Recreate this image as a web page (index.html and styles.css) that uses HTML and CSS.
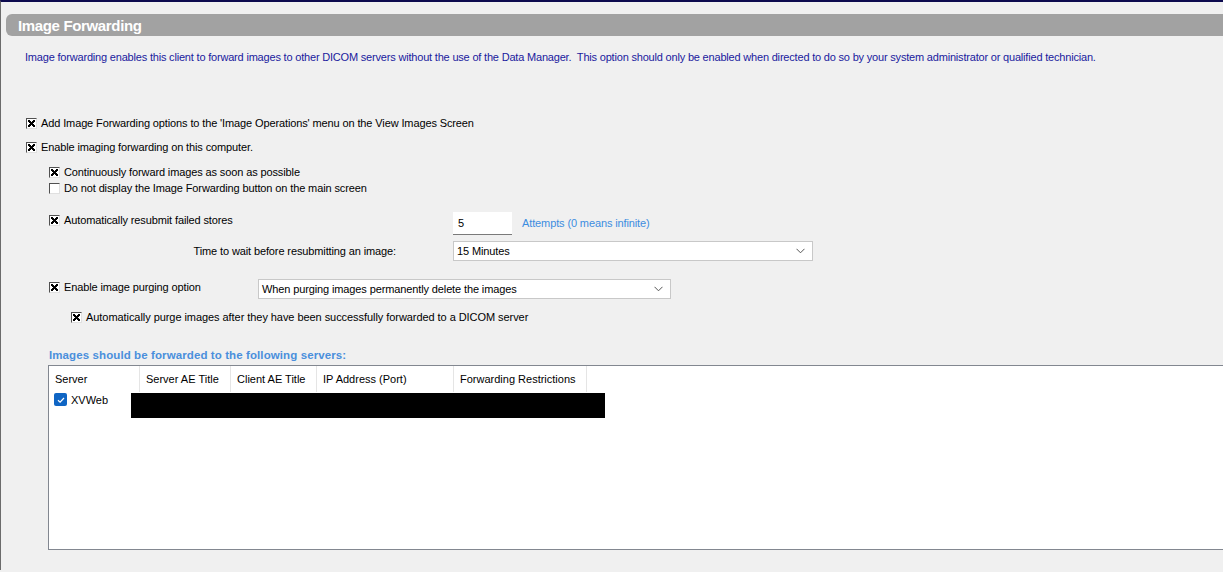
FILE: index.html
```html
<!DOCTYPE html>
<html>
<head>
<meta charset="utf-8">
<link rel="stylesheet" href="styles.css">
</head>
<body>
<div class="page">
  <div class="title-bar">Image Forwarding</div>
  <p class="desc">Image forwarding enables this client to forward images to other DICOM servers without the use of the Data Manager.&nbsp; This option should only be enabled when directed to do so by your system administrator or qualified technician.</p>

  <div class="opt opt-l1 r1"><span class="cb on"></span><span>Add Image Forwarding options to the 'Image Operations' menu on the View Images Screen</span></div>
  <div class="opt opt-l1 r2"><span class="cb on"></span><span>Enable imaging forwarding on this computer.</span></div>

  <div class="opt opt-l2 r3"><span class="cb on"></span><span>Continuously forward images as soon as possible</span></div>
  <div class="opt opt-l2 r4"><span class="cb"></span><span>Do not display the Image Forwarding button on the main screen</span></div>

  <div class="grid-row r5">
    <div class="opt opt-top"><span class="cb on"></span><span>Automatically resubmit failed stores</span></div>
    <div class="inline">
      <div class="textbox">5</div>
      <span class="hint">Attempts (0 means infinite)</span>
    </div>
  </div>

  <div class="grid-row r6">
    <div class="right-label">Time to wait before resubmitting an image:</div>
    <div class="select sel-wait"><span>15 Minutes</span><svg class="chev" width="9" height="6" viewBox="0 0 9 6"><path d="M0.5 0.8 L4.5 4.8 L8.5 0.8" fill="none" stroke="#555" stroke-width="1"/></svg></div>
  </div>

  <div class="purge-row r7">
    <div class="opt purge-label"><span class="cb on"></span><span>Enable image purging option</span></div>
    <div class="select sel-purge"><span>When purging images permanently delete the images</span><svg class="chev" width="9" height="6" viewBox="0 0 9 6"><path d="M0.5 0.8 L4.5 4.8 L8.5 0.8" fill="none" stroke="#555" stroke-width="1"/></svg></div>
  </div>

  <div class="opt opt-l3 r8"><span class="cb on"></span><span>Automatically purge images after they have been successfully forwarded to a DICOM server</span></div>

  <div class="servers-label">Images should be forwarded to the following servers:</div>

  <div class="listbox">
    <div class="lv-head">
      <div class="col c1">Server</div>
      <div class="col c2">Server AE Title</div>
      <div class="col c3">Client AE Title</div>
      <div class="col c4">IP Address (Port)</div>
      <div class="col c5">Forwarding Restrictions</div>
    </div>
    <div class="lv-row">
      <span class="mcb"><svg width="12" height="12" viewBox="0 0 12 12"><path d="M3 6.2 L5.1 8.2 L9 4" fill="none" stroke="#fff" stroke-width="1.2"/></svg></span>
      <span class="srv">XVWeb</span>
      <span class="redact"></span>
    </div>
  </div>
</div>
</body>
</html>
```
FILE: styles.css
```css
html, body {
  margin: 0;
  padding: 0;
}
body {
  background: #f0f0f0;
  width: 1223px;
  height: 572px;
  overflow: hidden;
  font-family: Tahoma, "Liberation Sans", "DejaVu Sans", sans-serif;
  font-size: 11px;
  letter-spacing: -0.12px;
  color: #000;
}
.page {
  border-top: 2px solid #0c0a4e;
  border-left: 1px solid #6b6b6b;
  height: 570px;
  box-sizing: border-box;
  position: relative;
}
.title-bar {
  margin: 12px 0 0 5px;
  height: 22px;
  box-sizing: border-box;
  padding-top: 2px;
  line-height: 20px;
  background: #a2a2a2;
  border-radius: 6px 0 0 6px;
  color: #fff;
  font-weight: bold;
  font-size: 15px;
  letter-spacing: -0.35px;
  padding-left: 12px;
  font-family: "Liberation Sans", Arial, sans-serif;
}
.desc {
  margin: 13px 0 0 24px;
  height: 16px;
  line-height: 16px;
  color: #1a1a9e;
  white-space: nowrap;
  letter-spacing: -0.19px;
}
.opt {
  display: flex;
  align-items: center;
  height: 16px;
  line-height: 16px;
  white-space: nowrap;
}
.opt .cb {
  margin-right: 4px;
}
.opt-l1 { padding-left: 25px; }
.opt-l2 { padding-left: 48px; }
.opt-l3 { padding-left: 70px; }
.r1 { margin-top: 50px; }
.r2 { margin-top: 8px; }
.r3 { margin-top: 9px; }
.r4 { margin-top: 0; }
.cb {
  display: inline-block;
  width: 11px;
  height: 11px;
  box-sizing: border-box;
  background: #fff;
  border-top: 1px solid #505050;
  border-left: 1px solid #505050;
  border-right: 1px solid #e0e0e0;
  border-bottom: 1px solid #e0e0e0;
  position: relative;
  flex: none;
}
.cb.on::after {
  content: "";
  position: absolute;
  left: 1px;
  top: 1px;
  width: 7px;
  height: 7px;
  background:
    linear-gradient(45deg, transparent 40%, #000 40%, #000 60%, transparent 60%),
    linear-gradient(-45deg, transparent 40%, #000 40%, #000 60%, transparent 60%);
}
.grid-row {
  display: grid;
  grid-template-columns: 404px auto;
  padding-left: 48px;
}
.r5 { margin-top: 15px; height: 24px; }
.opt-top { align-self: start; margin-top: 1px; }
.inline {
  display: flex;
  align-items: center;
  gap: 10px;
}
.textbox {
  width: 59px;
  height: 23px;
  box-sizing: border-box;
  background: #fff;
  border-bottom: 1px solid #7a7a7a;
  padding: 3px 0 0 5px;
  line-height: 16px;
}
.hint {
  color: #3c8de0;
}
.r6 { margin-top: 6px; height: 20px; align-items: center; }
.right-label {
  text-align: right;
  padding-right: 57px;
  white-space: nowrap;
}
.select {
  box-sizing: border-box;
  height: 20px;
  background: #fff;
  border: 1px solid #c8c8c8;
  display: flex;
  align-items: center;
  justify-content: space-between;
  padding: 0 7px 0 3px;
  white-space: nowrap;
}
.sel-wait { width: 360px; }
.sel-purge { width: 413px; }
.chev { flex: none; }
.purge-row {
  display: flex;
  padding-left: 48px;
  height: 20px;
}
.r7 { margin-top: 18px; }
.purge-label { width: 209px; }
.r8 { margin-top: 10px; letter-spacing: -0.06px; }
.servers-label {
  margin: 23px 0 0 48px;
  height: 15px;
  line-height: 15px;
  color: #4a8fdc;
  font-weight: bold;
  font-size: 11.5px;
  letter-spacing: 0.1px;
  white-space: nowrap;
}
.listbox {
  margin: 2px 0 0 47px;
  height: 185px;
  box-sizing: border-box;
  background: #fff;
  border: 1px solid #828790;
  border-right: none;
  font-family: "Liberation Sans", "Segoe UI", sans-serif;
  font-size: 11px;
  letter-spacing: 0;
}
.lv-head {
  display: flex;
  height: 27px;
}
.col {
  box-sizing: border-box;
  border-right: 1px solid #e5e5e5;
  padding: 7px 0 0 6px;
  height: 26px;
  white-space: nowrap;
}
.c1 { width: 91px; }
.c2 { width: 91px; }
.c3 { width: 86px; }
.c4 { width: 137px; }
.c5 { width: 133px; }
.lv-row {
  display: flex;
  align-items: flex-start;
  height: 26px;
}
.mcb {
  width: 13px;
  height: 13px;
  margin: 0 0 0 5px;
  border-radius: 2px;
  background: #0f65c4;
  display: flex;
  align-items: center;
  justify-content: center;
  flex: none;
}
.srv {
  margin: 1px 0 0 4px;
  width: 60px;
  font-size: 11px;
}
.redact {
  width: 474px;
  height: 25px;
  background: #000;
}
```
